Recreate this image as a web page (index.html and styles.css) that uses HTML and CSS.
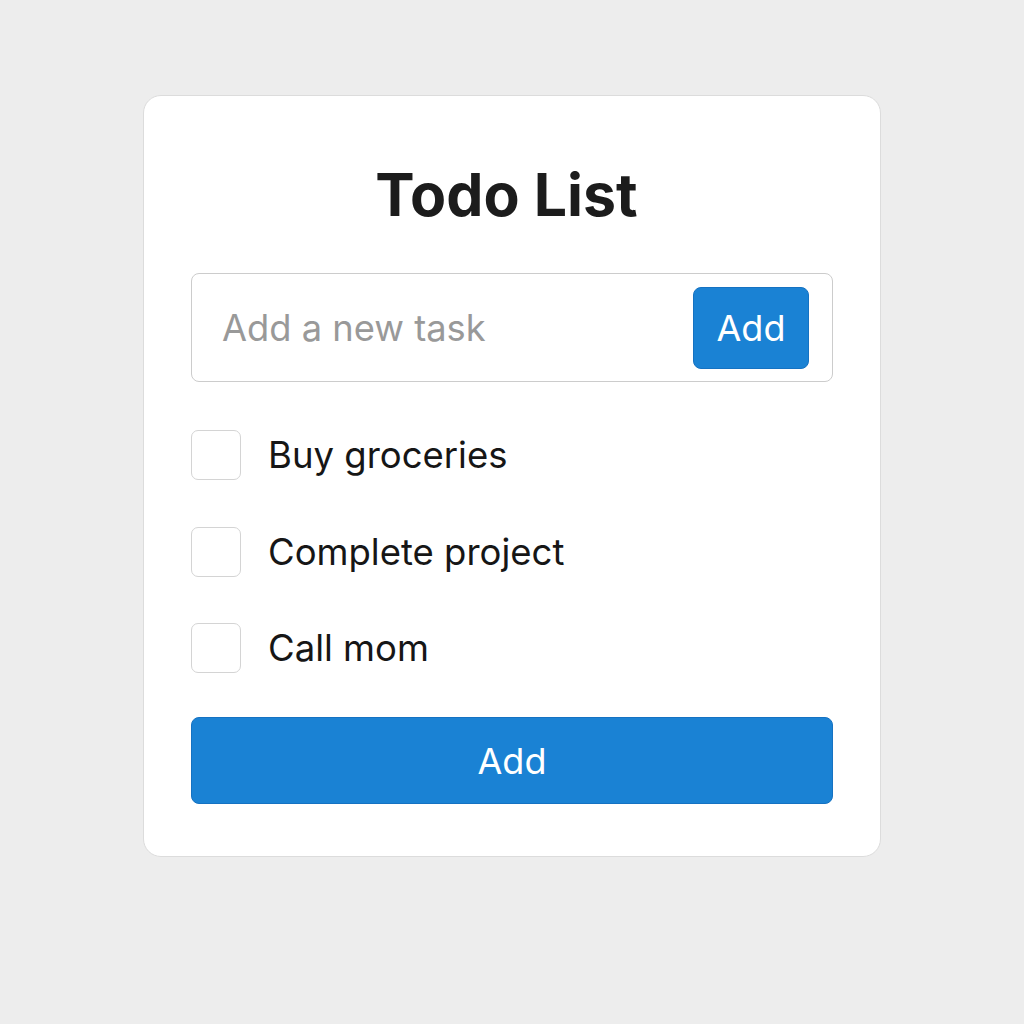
FILE: index.html
```html
<!DOCTYPE html>
<html lang="en">
<head>
<meta charset="utf-8">
<title>Todo List</title>
<link rel="stylesheet" href="styles.css">
</head>
<body>
<div class="card">
  <h1 class="title">Todo List</h1>
  <div class="input-row">
    <input class="task-input" type="text" placeholder="Add a new task">
    <button class="btn btn-small">Add</button>
  </div>
  <ul class="list">
    <li class="item"><span class="box"></span><span class="label">Buy groceries</span></li>
    <li class="item"><span class="box"></span><span class="label">Complete project</span></li>
    <li class="item"><span class="box"></span><span class="label">Call mom</span></li>
  </ul>
  <button class="btn btn-wide">Add</button>
</div>
</body>
</html>
```

FILE: styles.css
```css
* { box-sizing: border-box; }
body {
  margin: 0;
  background: #ededed;
  font-family: Inter, "Noto Sans", sans-serif;
}
.card {
  width: 738px;
  margin: 95px auto 0;
  background: #fff;
  border: 1px solid #dcdcdc;
  border-radius: 18px;
  padding: 59px 47px 52px;
}
.title {
  margin: 0;
  padding-right: 11px;
  text-align: center;
  font-size: 59px;
  font-weight: 700;
  line-height: 80px;
  color: #1c1c1c;
}
.input-row {
  margin-top: 38px;
  height: 109px;
  border: 1px solid #cccccc;
  border-radius: 8px;
  display: flex;
  align-items: center;
  padding: 0 23px 0 30px;
}
.task-input {
  flex: 1;
  min-width: 0;
  width: 0;
  border: none;
  outline: none;
  font-family: inherit;
  font-size: 36.3px;
  color: #333;
  background: transparent;
  padding: 0;
}
.task-input::placeholder { color: #999; }
.btn {
  background: #1a82d4;
  color: #fff;
  border: 1px solid #1572c2;
  border-radius: 8px;
  font-family: inherit;
  font-size: 36px;
  padding: 0;
}
.btn-small {
  flex: none;
  width: 116px;
  height: 82px;
}
.list {
  list-style: none;
  margin: 48px 0 0;
  padding: 0;
  display: flex;
  flex-direction: column;
  gap: 46.5px;
}
.item {
  display: flex;
  align-items: center;
  height: 50px;
}
.box {
  width: 50px;
  height: 50px;
  border: 1.5px solid #d4d4d4;
  border-radius: 7px;
  flex: none;
}
.label {
  margin-left: 27px;
  font-size: 36.5px;
  color: #161616;
}
.btn-wide {
  display: block;
  width: 100%;
  height: 87px;
  margin-top: 44px;
}
```
